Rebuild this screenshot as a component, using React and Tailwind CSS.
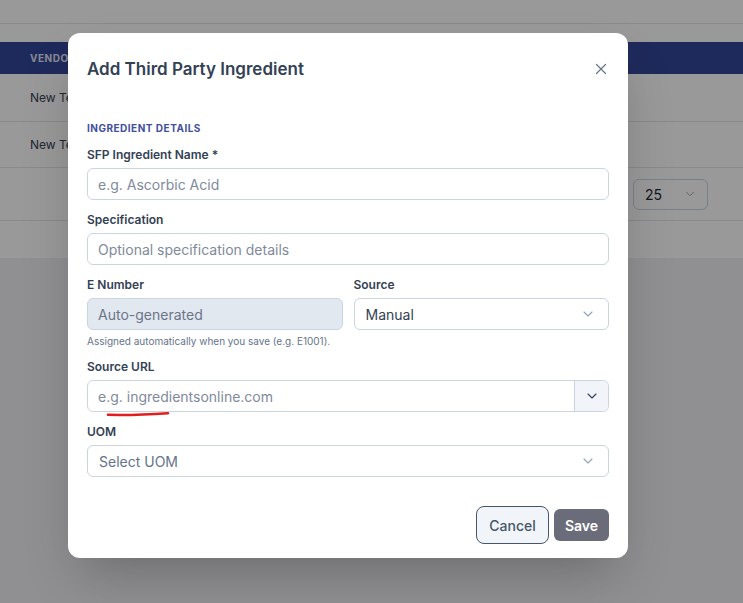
import React from "react";

const Chevron = ({ className = "" }) => (
  <svg viewBox="0 0 24 24" fill="none" stroke="currentColor" strokeWidth="1.6" strokeLinecap="round" strokeLinejoin="round" className={className}>
    <path d="M6 9l6 6 6-6" />
  </svg>
);

const Label = ({ children }) => (
  <div className="text-[12px] leading-4 font-semibold text-[#334155] mb-[5px]">{children}</div>
);

const Input = ({ placeholder, className = "" }) => (
  <div className={`h-8 rounded-md border border-[#cbd5e1] flex items-center px-[10px] text-[14px] ${className}`}>
    {placeholder}
  </div>
);

export default function App() {
  return (
    <div className="relative w-[743px] h-[603px] overflow-hidden bg-[#f0f1f3]" style={{ fontFamily: "Inter, 'Noto Sans', sans-serif" }}>
      {/* background page */}
      <div className="flex flex-col">
        <div className="h-[24px] bg-white border-b border-[#e5e7eb]" />
        <div className="h-[18px] bg-white" />
        <div className="h-[32px] bg-[#34469a] flex items-center pl-[30px] text-[10px] font-bold tracking-wider text-[#dfe4f5]">VENDOR</div>
        <div className="h-[48px] bg-white border-b border-[#e5e7eb] flex items-center pl-[30px] text-[12px] text-[#374151]">New Test Vendor</div>
        <div className="h-[46px] bg-white border-b border-[#e5e7eb] flex items-center pl-[30px] text-[12px] text-[#374151]">New Test Vendor</div>
        <div className="h-[53px] bg-white border-b border-[#e5e7eb] flex items-center justify-end pr-[35px]">
          <div className="w-[75px] h-[31px] rounded-md border border-[#cbd5e1] flex items-center justify-between pl-[11px] pr-[10px] text-[14px] text-[#1f2937]">
            <span>25</span>
            <Chevron className="w-[14px] h-[14px] text-[#94a3b8]" />
          </div>
        </div>
        <div className="h-[37px] bg-white" />
      </div>

      {/* overlay */}
      <div className="absolute inset-0 bg-black/40" />

      {/* modal */}
      <div className="absolute left-[68px] top-[33px] w-[560px] bg-white rounded-xl shadow-2xl px-[19px] pt-[22px] pb-[14px]">
        <div className="flex items-center justify-between h-7">
          <h2 className="text-[17px] font-semibold text-[#334155] leading-7">Add Third Party Ingredient</h2>
          <svg viewBox="0 0 24 24" className="w-[18px] h-[18px] mr-[-1px] text-[#64748b]" fill="none" stroke="currentColor" strokeWidth="1.6" strokeLinecap="round">
            <path d="M6 6l12 12M18 6L6 18" />
          </svg>
        </div>

        <div className="mt-[38px] text-[10px] leading-[14px] font-bold tracking-wider text-[#3f4f9f]">INGREDIENT DETAILS</div>

        <div className="mt-[12px] flex flex-col">
          <div>
            <Label>SFP Ingredient Name *</Label>
            <Input placeholder="e.g. Ascorbic Acid" className="text-[#808a9c]" />
          </div>
          <div className="mt-[12px]">
            <Label>Specification</Label>
            <Input placeholder="Optional specification details" className="text-[#808a9c]" />
          </div>
          <div className="mt-[12px] grid grid-cols-2 gap-[11px]">
            <div>
              <Label>E Number</Label>
              <Input placeholder="Auto-generated" className="bg-[#e2e8f0] text-[#6b7588]" />
              <div className="mt-[4px] text-[10px] leading-[14px] text-[#64748b]">Assigned automatically when you save (e.g. E1001).</div>
            </div>
            <div>
              <Label>Source</Label>
              <div className="h-8 rounded-md border border-[#cbd5e1] flex items-center justify-between pl-[11px] pr-[12px] text-[14px] text-[#334155]">
                <span>Manual</span>
                <Chevron className="w-[16px] h-[16px] text-[#94a3b8]" />
              </div>
            </div>
          </div>
          <div className="mt-[11px]">
            <Label>Source URL</Label>
            <div className="relative h-8 rounded-md border border-[#cbd5e1] flex items-stretch text-[14px]">
              <div className="flex-1 flex items-center px-[10px] text-[#808a9c]">e.g. ingredientsonline.com</div>
              <div className="w-[34px] border-l border-[#cbd5e1] bg-[#f1f5f9] rounded-r-md flex items-center justify-center">
                <Chevron className="w-[16px] h-[16px] text-[#334155]" />
              </div>
              <svg className="absolute left-[19px] top-[30px] w-[63px] h-[6px] overflow-visible" viewBox="0 0 63 6" fill="none">
                <path d="M1 3.8 C 18 4.2, 40 3.6, 61 2.2" stroke="#e11d1d" strokeWidth="2.6" strokeLinecap="round" />
              </svg>
            </div>
          </div>
          <div className="mt-[12px]">
            <Label>UOM</Label>
            <div className="h-8 rounded-md border border-[#cbd5e1] flex items-center justify-between pl-[11px] pr-[12px] text-[14px] text-[#64748b]">
              <span>Select UOM</span>
              <Chevron className="w-[16px] h-[16px] text-[#94a3b8]" />
            </div>
          </div>
        </div>

        <div className="mt-[29px] flex justify-end items-center gap-[5px]">
          <button className="w-[73px] h-[38px] rounded-lg border border-[#475569] bg-[#f1f5f9] text-[14px] font-medium text-[#475569]">Cancel</button>
          <button className="w-[55px] h-8 rounded-md bg-[#6b6c7a] text-[14px] font-semibold text-white">Save</button>
        </div>
      </div>
    </div>
  );
}
